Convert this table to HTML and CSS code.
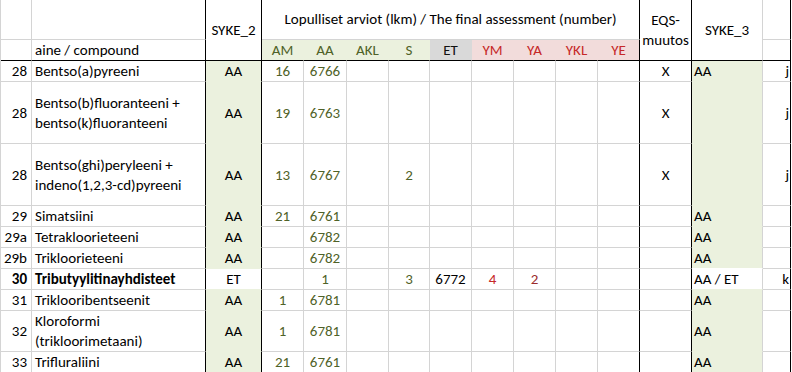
FILE: index.html
```html
<!DOCTYPE html>
<html lang="fi">
<head>
<meta charset="utf-8">
<title>Lopulliset arviot</title>
<link rel="stylesheet" href="styles.css">
</head>
<body>
<table class="sheet">
  <colgroup>
    <col class="w-no"><col class="w-name"><col class="w-syke2">
    <col class="w-am"><col class="w-aa"><col class="w-akl"><col class="w-s"><col class="w-et">
    <col class="w-ym"><col class="w-ya"><col class="w-ykl"><col class="w-ye">
    <col class="w-eqs"><col class="w-syke3"><col class="w-last">
  </colgroup>
  <thead>
    <tr class="h1">
      <th class="cell"></th>
      <th class="cell bk-r"></th>
      <th class="cell bk-r bk-b c" rowspan="2">SYKE_2</th>
      <th class="cell c title bk-r" colspan="9">Lopulliset arviot (lkm) / The final assessment (number)</th>
      <th class="cell c bk-r bk-b eqs" rowspan="2">EQS-<br>muutos</th>
      <th class="cell c bk-b" rowspan="2">SYKE_3</th>
      <th class="cell bk-r2"></th>
    </tr>
    <tr class="h2">
      <th class="cell bk-b"></th>
      <th class="cell bk-r bk-b l">aine / compound</th>
      <th class="cell bk-b c g-h">AM</th>
      <th class="cell bk-b c g-h">AA</th>
      <th class="cell bk-b c g-h">AKL</th>
      <th class="cell bk-b c g-h">S</th>
      <th class="cell bk-b c e-h">ET</th>
      <th class="cell bk-b c p-h">YM</th>
      <th class="cell bk-b c p-h">YA</th>
      <th class="cell bk-b c p-h">YKL</th>
      <th class="cell bk-b c p-h bk-r">YE</th>
      <th class="cell bk-b bk-r2"></th>
    </tr>
  </thead>
  <tbody>
    <tr class="r1">
      <td class="cell num">28</td><td class="cell name bk-r">Bentso(a)pyreeni</td><td class="cell c fill bk-r">AA</td>
      <td class="cell c ol">16</td><td class="cell c ol">6766</td><td class="cell"></td><td class="cell"></td><td class="cell"></td>
      <td class="cell"></td><td class="cell"></td><td class="cell"></td><td class="cell bk-r"></td>
      <td class="cell c bk-r">X</td><td class="cell fill s3">AA</td><td class="cell rt bk-r2">j</td>
    </tr>
    <tr class="r3">
      <td class="cell num">28</td><td class="cell name bk-r">Bentso(b)fluoranteeni +<br>bentso(k)fluoranteeni</td><td class="cell c fill bk-r">AA</td>
      <td class="cell c ol">19</td><td class="cell c ol">6763</td><td class="cell"></td><td class="cell"></td><td class="cell"></td>
      <td class="cell"></td><td class="cell"></td><td class="cell"></td><td class="cell bk-r"></td>
      <td class="cell c bk-r">X</td><td class="cell fill s3"></td><td class="cell rt bk-r2">j</td>
    </tr>
    <tr class="r3">
      <td class="cell num">28</td><td class="cell name bk-r">Bentso(ghi)peryleeni +<br>indeno(1,2,3-cd)pyreeni</td><td class="cell c fill bk-r">AA</td>
      <td class="cell c ol">13</td><td class="cell c ol">6767</td><td class="cell"></td><td class="cell c ol">2</td><td class="cell"></td>
      <td class="cell"></td><td class="cell"></td><td class="cell"></td><td class="cell bk-r"></td>
      <td class="cell c bk-r">X</td><td class="cell fill s3"></td><td class="cell rt bk-r2">j</td>
    </tr>
    <tr class="r1">
      <td class="cell num">29</td><td class="cell name bk-r">Simatsiini</td><td class="cell c fill bk-r">AA</td>
      <td class="cell c ol">21</td><td class="cell c ol">6761</td><td class="cell"></td><td class="cell"></td><td class="cell"></td>
      <td class="cell"></td><td class="cell"></td><td class="cell"></td><td class="cell bk-r"></td>
      <td class="cell bk-r"></td><td class="cell fill s3">AA</td><td class="cell bk-r2"></td>
    </tr>
    <tr class="r1">
      <td class="cell num">29a</td><td class="cell name bk-r">Tetrakloorieteeni</td><td class="cell c fill bk-r">AA</td>
      <td class="cell"></td><td class="cell c ol">6782</td><td class="cell"></td><td class="cell"></td><td class="cell"></td>
      <td class="cell"></td><td class="cell"></td><td class="cell"></td><td class="cell bk-r"></td>
      <td class="cell bk-r"></td><td class="cell fill s3">AA</td><td class="cell bk-r2"></td>
    </tr>
    <tr class="r1">
      <td class="cell num">29b</td><td class="cell name bk-r">Trikloorieteeni</td><td class="cell c fill bk-r">AA</td>
      <td class="cell"></td><td class="cell c ol">6782</td><td class="cell"></td><td class="cell"></td><td class="cell"></td>
      <td class="cell"></td><td class="cell"></td><td class="cell"></td><td class="cell bk-r"></td>
      <td class="cell bk-r"></td><td class="cell fill s3 pre-white">AA</td><td class="cell bk-r2"></td>
    </tr>
    <tr class="r1 bold-row">
      <td class="cell num b">30</td><td class="cell name b bk-r">Tributyylitinayhdisteet</td><td class="cell c white bk-r">ET</td>
      <td class="cell"></td><td class="cell c ol">1</td><td class="cell"></td><td class="cell c ol">3</td><td class="cell c">6772</td>
      <td class="cell c red">4</td><td class="cell c red2">2</td><td class="cell"></td><td class="cell bk-r"></td>
      <td class="cell bk-r"></td><td class="cell white s3">AA / ET</td><td class="cell rt bk-r2">k</td>
    </tr>
    <tr class="r1">
      <td class="cell num">31</td><td class="cell name bk-r">Triklooribentseenit</td><td class="cell c fill bk-r">AA</td>
      <td class="cell c ol">1</td><td class="cell c ol">6781</td><td class="cell"></td><td class="cell"></td><td class="cell"></td>
      <td class="cell"></td><td class="cell"></td><td class="cell"></td><td class="cell bk-r"></td>
      <td class="cell bk-r"></td><td class="cell fill s3">AA</td><td class="cell bk-r2"></td>
    </tr>
    <tr class="r2">
      <td class="cell num">32</td><td class="cell name bk-r">Kloroformi<br>(trikloorimetaani)</td><td class="cell c fill bk-r">AA</td>
      <td class="cell c ol">1</td><td class="cell c ol">6781</td><td class="cell"></td><td class="cell"></td><td class="cell"></td>
      <td class="cell"></td><td class="cell"></td><td class="cell"></td><td class="cell bk-r"></td>
      <td class="cell bk-r"></td><td class="cell fill s3">AA</td><td class="cell bk-r2"></td>
    </tr>
    <tr class="r1">
      <td class="cell num">33</td><td class="cell name bk-r">Trifluraliini</td><td class="cell c fill bk-r">AA</td>
      <td class="cell c ol">21</td><td class="cell c ol">6761</td><td class="cell"></td><td class="cell"></td><td class="cell"></td>
      <td class="cell"></td><td class="cell"></td><td class="cell"></td><td class="cell bk-r"></td>
      <td class="cell bk-r"></td><td class="cell fill s3">AA</td><td class="cell bk-r2"></td>
    </tr>
  </tbody>
</table>
</body>
</html>
```
FILE: styles.css
```css
html, body {
  margin: 0;
  padding: 0;
  background: #ffffff;
  overflow: hidden;
}

.sheet {
  border-collapse: separate;
  border-spacing: 0;
  table-layout: fixed;
  width: 791px;
  border-left: 1px solid #d4d4d4;
  font-family: "Carlito", "Lato", "Liberation Sans", sans-serif;
  font-size: 15px;
  line-height: 20px;
  color: #000000;
}

.w-no { width: 31px; }
.w-name { width: 174px; }
.w-syke2 { width: 56px; }
.w-am { width: 42px; }
.w-aa { width: 43px; }
.w-akl { width: 42px; }
.w-s { width: 41px; }
.w-et, .w-ym, .w-ya, .w-ykl, .w-ye { width: 42px; }
.w-eqs { width: 52px; }
.w-syke3 { width: 71px; }
.w-last { width: 28px; }

.cell {
  box-sizing: border-box;
  padding: 0 2px;
  border-right: 1px solid #d4d4d4;
  border-bottom: 1px solid #d4d4d4;
  vertical-align: middle;
  font-weight: normal;
  white-space: nowrap;
  overflow: hidden;
}

.h1 .cell { height: 40px; }
.h2 .cell { height: 21px; }
.r1 .cell { height: 21px; }
.r2 .cell { height: 41px; }
.r3 .cell { height: 62px; }

.bk-r { border-right-color: #000000; }
.bk-r2 { border-right-color: #000000; }
.bk-b { border-bottom-color: #000000; }

.c { text-align: center; }
.l { text-align: left; padding-left: 3px; }
.rt { text-align: right; padding-right: 1px; }
.num { text-align: right; padding-right: 4px; }
.name { text-align: left; padding-left: 3px; }
.b { font-weight: bold; }

.title { padding-bottom: 1px; }
.eqs { line-height: 20px; }

.g-h { background: #ebf1de; color: #4f6228; border-right-color: #ebf1de; }
.e-h { background: #d9d9d9; color: #111111; border-right-color: #d9d9d9; }
.p-h { background: #f2dcdb; color: #c62828; border-right-color: #f2dcdb; }
.p-h.bk-r { border-right-color: #000000; }

.fill { background: #ebf1de; border-bottom-color: #ebf1de; }
.white { background: #ffffff; border-bottom-color: #ebf1de; }
.pre-white { border-bottom-color: #ffffff; }
.s3 { text-align: left; padding-left: 2px; }

.ol { color: #4f6228; }
.red { color: #c62828; }
.red2 { color: #9b2d2d; }
```
